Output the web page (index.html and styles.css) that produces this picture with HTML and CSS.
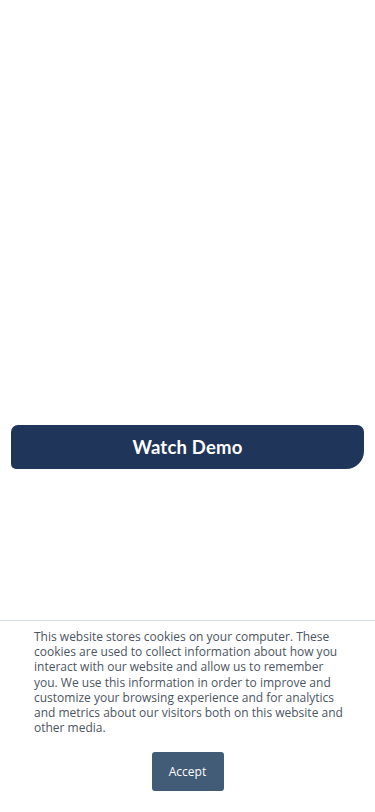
FILE: index.html
```html
<!DOCTYPE html>
<html lang="en">
<head>
<meta charset="utf-8">
<meta name="viewport" content="width=device-width, initial-scale=1">
<title>Watch Demo</title>
<link rel="stylesheet" href="styles.css">
</head>
<body>
<main class="page">
  <div class="hero"></div>
  <div class="cta-wrap">
    <a class="cta" href="#">Watch Demo</a>
  </div>
</main>
<div class="cookie-banner">
  <p class="cookie-text">This website stores cookies on your computer. These cookies are used to collect information about how you interact with our website and allow us to remember you. We use this information in order to improve and customize your browsing experience and for analytics and metrics about our visitors both on this website and other media.</p>
  <div class="cookie-actions">
    <button class="accept" type="button">Accept</button>
  </div>
</div>
</body>
</html>
```
FILE: styles.css
```css
html, body {
  margin: 0;
  padding: 0;
  background: #ffffff;
}
body {
  font-family: "Lato", "Noto Sans", sans-serif;
  height: 812px;
  overflow: hidden;
}
.page {
  display: flex;
  flex-direction: column;
}
.hero {
  height: 425px;
}
.cta-wrap {
  padding: 0 11px;
}
.cta {
  display: flex;
  align-items: center;
  justify-content: center;
  height: 44px;
  background: #20355a;
  color: #ffffff;
  text-decoration: none;
  font-family: "Lato", sans-serif;
  font-weight: 700;
  font-size: 18.5px;
  letter-spacing: 0.2px;
  border-radius: 7px 7px 18px 5px;
}
.cookie-banner {
  position: fixed;
  left: 0;
  right: 0;
  bottom: 0;
  height: 192px;
  box-sizing: border-box;
  background: #ffffff;
  border-top: 1px solid #d3dbe8;
  padding: 8px 31px 0 34px;
  display: flex;
  flex-direction: column;
}
.cookie-text {
  margin: 0;
  font-family: "Open Sans", sans-serif;
  font-size: 12px;
  line-height: 15.2px;
  color: #4b5562;
}
.cookie-actions {
  display: flex;
  justify-content: center;
  margin-top: 17px;
  padding-right: 3px;
}
.accept {
  width: 72px;
  height: 39px;
  border: none;
  border-radius: 3px;
  background: #425b76;
  color: #ffffff;
  font-family: "Open Sans", sans-serif;
  font-size: 12px;
  padding: 0;
}
```
